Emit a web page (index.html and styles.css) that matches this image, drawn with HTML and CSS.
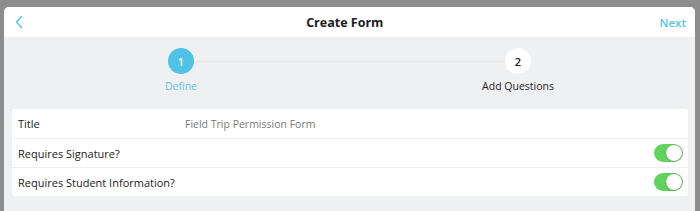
FILE: index.html
```html
<!DOCTYPE html>
<html>
<head>
<meta charset="utf-8">
<link rel="stylesheet" href="styles.css">
</head>
<body>
<div class="modal">
  <header class="bar">
    <svg class="back" width="10" height="14" viewBox="0 0 10 14"><path d="M7.5 1.5 L2.5 7 L7.5 12.5" fill="none" stroke="#56c3e4" stroke-width="1.4" stroke-linecap="round" stroke-linejoin="round"/></svg>
    <h1 class="title">Create Form</h1>
    <span class="next">Next</span>
  </header>
  <div class="stepper">
    <div class="step active">
      <div class="dot">1</div>
      <div class="label">Define</div>
    </div>
    <div class="connector"></div>
    <div class="step">
      <div class="dot">2</div>
      <div class="label">Add Questions</div>
    </div>
  </div>
  <div class="card">
    <div class="row">
      <span class="name">Title</span>
      <span class="value">Field Trip Permission Form</span>
    </div>
    <div class="row">
      <span class="name">Requires Signature?</span>
      <span class="toggle"><span class="knob"></span></span>
    </div>
    <div class="row">
      <span class="name">Requires Student Information?</span>
      <span class="toggle"><span class="knob"></span></span>
    </div>
  </div>
</div>
</body>
</html>
```
FILE: styles.css
```css
html, body {
  margin: 0;
  padding: 0;
  height: 211px;
  overflow: hidden;
  background: #8d8d8d;
  font-family: "Open Sans", "Noto Sans", sans-serif;
}
.modal {
  margin: 7px 5px 0 4px;
  height: 204px;
  background: #eff0f2;
  border-radius: 5px 5px 0 0;
  overflow: hidden;
}
.bar {
  height: 30px;
  background: #fff;
  display: flex;
  align-items: center;
  padding: 0 9px 0 10px;
}
.back {
  display: block;
}
.title {
  flex: 1;
  margin: 0;
  text-align: center;
  font-size: 12.5px;
  font-weight: 700;
  color: #1c1c1c;
  padding-left: 6px;
}
.next {
  font-size: 11.5px;
  font-weight: 600;
  color: #56c3e4;
}
.stepper {
  height: 72px;
  box-sizing: border-box;
  padding-top: 11px;
  display: flex;
  justify-content: center;
  align-items: flex-start;
}
.step {
  width: 26px;
  display: flex;
  flex-direction: column;
  align-items: center;
}
.dot {
  width: 26px;
  height: 26px;
  border-radius: 50%;
  background: #fff;
  color: #222;
  font-size: 11px;
  font-weight: 600;
  display: flex;
  align-items: center;
  justify-content: center;
}
.step.active .dot {
  background: #4fc2e5;
  color: #fff;
}
.label {
  margin-top: 5px;
  white-space: nowrap;
  font-size: 10.5px;
  color: #222;
}
.step.active .label {
  color: #62c4e6;
}
.connector {
  width: 311px;
  height: 1px;
  margin-top: 13px;
  background: #e5e7ea;
}
.card {
  margin: 0 7px 0 8px;
  background: #fff;
  border-radius: 3px;
}
.row {
  height: 28px;
  display: flex;
  align-items: center;
  padding: 0 5px 0 6px;
  border-top: 1px solid #eeeff1;
}
.row:first-child {
  border-top: none;
  height: 29px;
}
.name {
  font-size: 11px;
  color: #222;
  width: 167px;
}
.value {
  font-size: 10.5px;
  color: #7a7a7a;
}
.toggle {
  margin-left: auto;
  width: 29px;
  height: 18px;
  border-radius: 9px;
  background: #62d25e;
  display: flex;
  justify-content: flex-end;
  align-items: center;
  box-sizing: border-box;
  padding-right: 1px;
}
.knob {
  width: 16px;
  height: 16px;
  border-radius: 50%;
  background: #fff;
  box-shadow: 0 0 0 0.5px rgba(0,0,0,0.2), 0 1px 1px rgba(0,0,0,0.15);
}
```
